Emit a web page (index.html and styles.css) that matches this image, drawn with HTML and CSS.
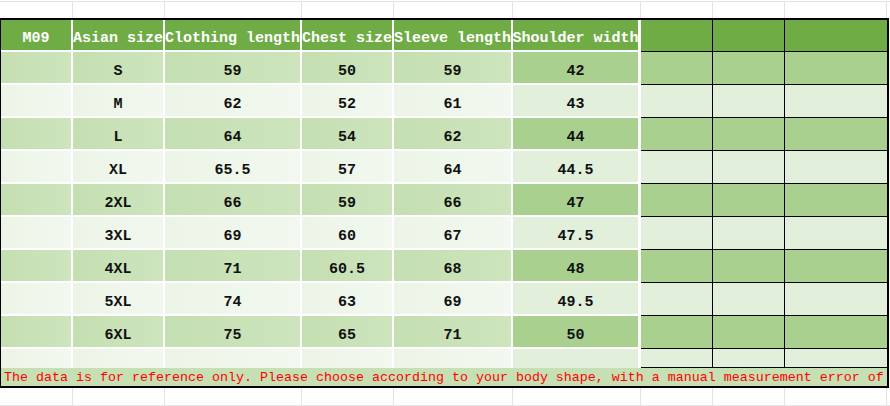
FILE: index.html
```html
<!DOCTYPE html>
<html>
<head>
<meta charset="utf-8">
<link rel="stylesheet" href="styles.css">
</head>
<body>
<div class="sheet">
  <div class="strip top"><div></div><div></div><div></div><div></div><div></div><div></div><div></div><div></div><div></div></div>
  <div class="table">
    <div class="row hd"><div>M09</div><div>Asian size</div><div>Clothing length</div><div>Chest size</div><div>Sleeve length</div><div class="sh">Shoulder width</div><div class="x"></div><div class="x"></div><div class="x"></div></div>
    <div class="row odd"><div></div><div>S</div><div>59</div><div>50</div><div>59</div><div class="sh">42</div><div class="x"></div><div class="x"></div><div class="x"></div></div>
    <div class="row even"><div></div><div>M</div><div>62</div><div>52</div><div>61</div><div class="sh">43</div><div class="x"></div><div class="x"></div><div class="x"></div></div>
    <div class="row odd"><div></div><div>L</div><div>64</div><div>54</div><div>62</div><div class="sh">44</div><div class="x"></div><div class="x"></div><div class="x"></div></div>
    <div class="row even"><div></div><div>XL</div><div>65.5</div><div>57</div><div>64</div><div class="sh">44.5</div><div class="x"></div><div class="x"></div><div class="x"></div></div>
    <div class="row odd"><div></div><div>2XL</div><div>66</div><div>59</div><div>66</div><div class="sh">47</div><div class="x"></div><div class="x"></div><div class="x"></div></div>
    <div class="row even"><div></div><div>3XL</div><div>69</div><div>60</div><div>67</div><div class="sh">47.5</div><div class="x"></div><div class="x"></div><div class="x"></div></div>
    <div class="row odd"><div></div><div>4XL</div><div>71</div><div>60.5</div><div>68</div><div class="sh">48</div><div class="x"></div><div class="x"></div><div class="x"></div></div>
    <div class="row even"><div></div><div>5XL</div><div>74</div><div>63</div><div>69</div><div class="sh">49.5</div><div class="x"></div><div class="x"></div><div class="x"></div></div>
    <div class="row odd"><div></div><div>6XL</div><div>75</div><div>65</div><div>71</div><div class="sh">50</div><div class="x"></div><div class="x"></div><div class="x"></div></div>
    <div class="row even blank"><div></div><div></div><div></div><div></div><div></div><div class="sh"></div><div class="x"></div><div class="x"></div><div class="x"></div></div>
    <div class="note">The data is for reference only. Please choose according to your body shape, with a manual measurement error of</div>
  </div>
  <div class="strip bottom"><div></div><div></div><div></div><div></div><div></div><div></div><div></div><div></div><div></div></div>
</div>
</body>
</html>
```
FILE: styles.css
```css
html, body {
  margin: 0;
  padding: 0;
  background: #ffffff;
}
.sheet {
  width: 890px;
  height: 406px;
  overflow: hidden;
  font-family: "Liberation Mono", "DejaVu Sans Mono", monospace;
}
.strip {
  display: grid;
  grid-template-columns: 72px 92px 137px 92px 119px 128px 72px 72px 102px;
  padding-left: 1px;
  box-sizing: border-box;
}
.strip > div {
  border-right: 1px solid #e3e3e3;
}
.strip.top {
  margin-top: 1px;
  height: 17px;
  border-top: 1px solid #e3e3e3;
}
.strip.bottom {
  height: 18px;
  border-bottom: 1px solid #e3e3e3;
  box-sizing: border-box;
}
.table {
  width: 889px;
  box-sizing: border-box;
  border-top: 2px solid #000;
  border-left: 1px solid #000;
  border-right: 2px solid #000;
  border-bottom: 2px solid #000;
}
.row {
  display: grid;
  grid-template-columns: 72px 92px 137px 92px 119px 128px 72px 72px 102px;
  height: 33px;
}
.row > div {
  box-sizing: border-box;
  border-right: 2px solid #fff;
  border-bottom: 2px solid #fff;
  display: flex;
  align-items: center;
  justify-content: center;
  padding-top: 7px;
  white-space: nowrap;
  font-size: 15px;
  font-weight: bold;
  color: #111;
}
.row > .sh {
  border-right-width: 3px;
}
.row > .x {
  border-right: 1px solid #000;
  border-bottom: 1px solid #000;
}
.row > .x:last-child {
  border-right: 0;
}
.hd {
  height: 32px;
}
.hd > div {
  background: #6fac46;
  color: #fff;
  padding-top: 6px;
}
.odd > div {
  background: linear-gradient(90deg, #c4dfb1, #cde4bd);
}
.odd > .sh,
.odd > .x {
  background: #a9d08e;
}
.even > div {
  background: linear-gradient(90deg, #ecf4e7, #f2f8ef);
}
.even > .sh,
.even > .x {
  background: #e2efda;
}
.blank {
  height: 19px;
}
.blank > div {
  border-bottom: 0;
}
.blank > .x {
  border-bottom: 1px solid #000;
}
.note {
  height: 18px;
  line-height: 20px;
  background: #c6e0b4;
  color: #ff0000;
  font-size: 13.33px;
  padding-left: 3px;
  white-space: nowrap;
  overflow: hidden;
}
```
